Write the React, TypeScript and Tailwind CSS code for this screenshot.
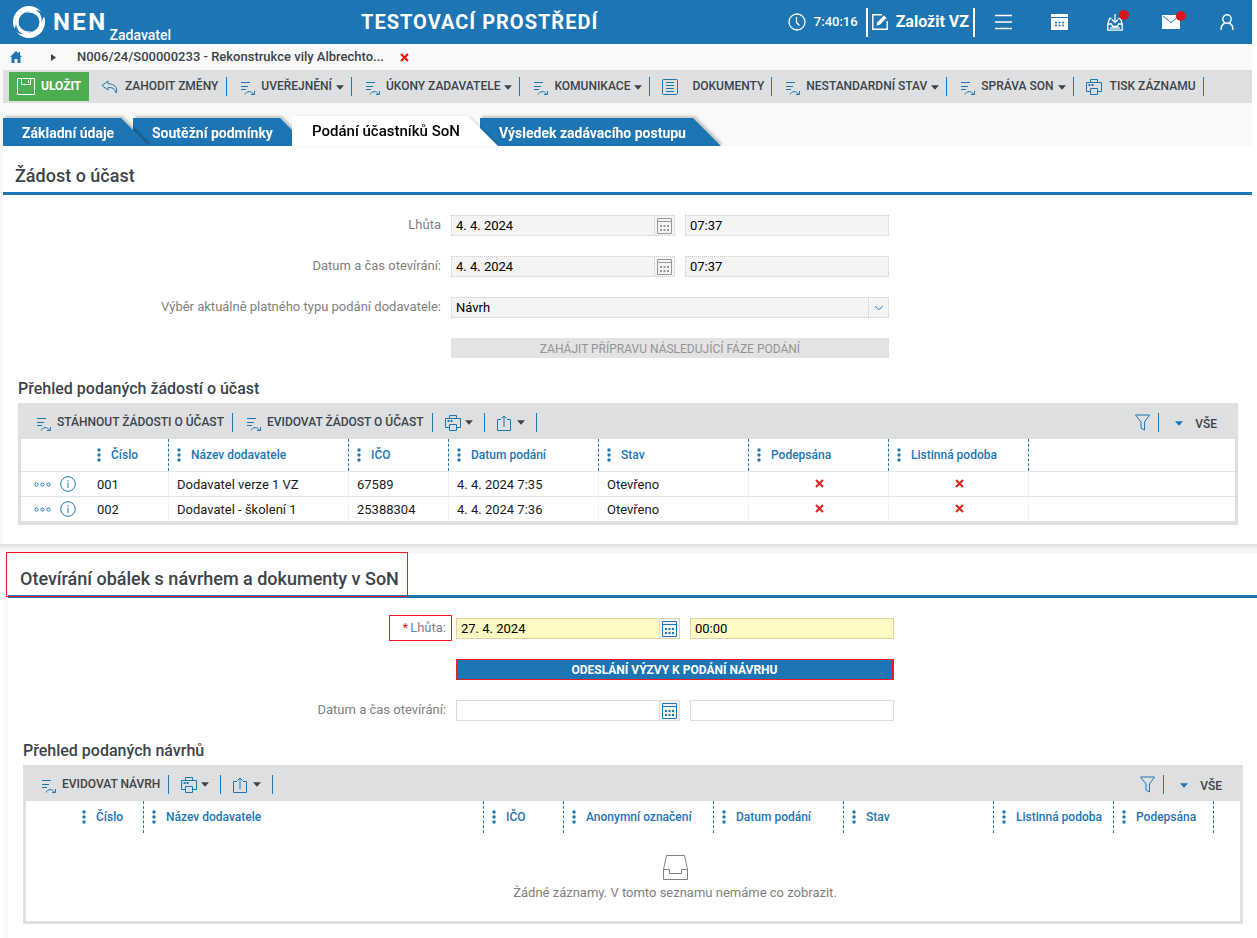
import type { ReactNode } from 'react'

type IconProps = { className?: string }

interface ToolbarItem {
  label: string
  icon: 'process' | 'list' | 'printer'
  caret?: boolean
}

interface Column {
  label: string
  width: string
}

const toolbarItems: ToolbarItem[] = [
  { label: 'UVEŘEJNĚNÍ', icon: 'process', caret: true },
  { label: 'ÚKONY ZADAVATELE', icon: 'process', caret: true },
  { label: 'KOMUNIKACE', icon: 'process', caret: true },
  { label: 'DOKUMENTY', icon: 'list' },
  { label: 'NESTANDARDNÍ STAV', icon: 'process', caret: true },
  { label: 'SPRÁVA SON', icon: 'process', caret: true },
  { label: 'TISK ZÁZNAMU', icon: 'printer' },
]

const requestColumns: Column[] = [
  { label: 'Číslo', width: 'w-[80px]' },
  { label: 'Název dodavatele', width: 'w-[180px]' },
  { label: 'IČO', width: 'w-[100px]' },
  { label: 'Datum podání', width: 'w-[150px]' },
  { label: 'Stav', width: 'w-[150px]' },
  { label: 'Podepsána', width: 'w-[140px]' },
  { label: 'Listinná podoba', width: 'w-[140px]' },
]

const offerColumns: Column[] = [
  { label: 'Číslo', width: 'w-[70px]' },
  { label: 'Název dodavatele', width: 'w-[340px]' },
  { label: 'IČO', width: 'w-[80px]' },
  { label: 'Anonymní označení', width: 'w-[150px]' },
  { label: 'Datum podání', width: 'w-[130px]' },
  { label: 'Stav', width: 'w-[150px]' },
  { label: 'Listinná podoba', width: 'w-[120px]' },
  { label: 'Podepsána', width: 'w-[100px]' },
]

const requests = [
  { number: '001', name: 'Dodavatel verze 1 VZ', ico: '67589', submitted: '4. 4. 2024 7:35', state: 'Otevřeno' },
  { number: '002', name: 'Dodavatel - školení 1', ico: '25388304', submitted: '4. 4. 2024 7:36', state: 'Otevřeno' },
]

/* Icons */

function Logo() {
  return (
    <svg width="34" height="34" viewBox="0 0 34 34" fill="#fff">
      <path
        fillRule="evenodd"
        d="M17 1a16 16 0 1 1 0 32a16 16 0 1 1 0-32zM17 7.500a10.500 9.500 0 1 0 0 19a10.500 9.500 0 1 0 0-19z"
      />
      <path d="M1 23C3 24 4 21 4 17C4 22 6 27 11 29C7 29 3 27 1 23z" fill="#1d75b3" />
      <path d="M24 5C29 8 30 13 29.500 18C30.500 14 31 12 33 11C31 7 28 5 24 5z" fill="#1d75b3" />
      <path d="M7 17C7 11 11 7 18 6.500C12 8 8.500 12 7.500 20z" fill="#1d75b3" />
      <path d="M27 17C27 23 23 27 16 27.500C22 26 25.500 22 26.500 14z" fill="#1d75b3" />
    </svg>
  )
}

function ProcessIcon() {
  return (
    <svg width="14" height="16" viewBox="0 0 14 16" fill="none" stroke="#1d75b3">
      <path d="M0 2.500h9M0 6.500h7M0 9.500h5" />
      <path d="M4 14.500C5.500 10.800 10.500 10.800 12.300 14M13.500 11v3.500H10" />
    </svg>
  )
}

function ListIcon() {
  return (
    <svg width="16" height="16" viewBox="0 0 16 16" fill="none" stroke="#1d75b3">
      <rect x=".5" y=".5" width="15" height="15" rx="1" />
      <path d="M4 3.500h8M4 6.500h8M4 9.500h8M4 12.500h8" />
    </svg>
  )
}

function PrinterIcon() {
  return (
    <svg width="16" height="16" viewBox="0 0 16 16" fill="none" stroke="#1d75b3">
      <path d="M4.500 3.500v-3h7v3M4.500 12.500h-4v-9h15v9h-4" />
      <path d="M4.500 9.500h7v6h-7z" />
      <path d="M2.500 6h2M5.500 6h2" strokeWidth="2" />
    </svg>
  )
}

function ShareIcon() {
  return (
    <svg width="14" height="16" viewBox="0 0 14 16" fill="none" stroke="#1d75b3">
      <path d="M4 4.500H.5v11h13v-11H10M7 1v11M4.500 3.500L7 1l2.500 2.500" />
    </svg>
  )
}

function UndoIcon() {
  return (
    <svg width="17" height="14" viewBox="0 0 17 14" fill="none" stroke="#1d75b3" strokeLinejoin="round">
      <path d="M7 1L1 5.500L7 10V7.500C11 7.200 14 8.500 15 13C17.500 8 13.500 3.700 7 3.700z" />
    </svg>
  )
}

function SaveIcon() {
  return (
    <svg width="18" height="17" viewBox="0 0 18 17" fill="none" stroke="#fff">
      <path d="M.5.500h17v16H.5zM4.500.500v6h9v-6M11.500 2v3" />
    </svg>
  )
}

function FilterIcon() {
  return (
    <svg width="15" height="17" viewBox="0 0 15 17" fill="none" stroke="#1d75b3">
      <path d="M.5 1h14L9.500 8v8l-3.500-2V8z" />
    </svg>
  )
}

function Caret({ className = 'text-[#3b444b]' }: IconProps) {
  return (
    <svg width="8" height="5" viewBox="0 0 8 5" className={className} fill="currentColor">
      <path d="M0 .3h8L4 4.700z" />
    </svg>
  )
}

function CalendarIcon({ className = 'text-[#1d75b3]' }: IconProps) {
  return (
    <svg width="15" height="16" viewBox="0 0 15 16" className={className} fill="none" stroke="currentColor">
      <path d="M.5.500h14v15H.5zM0 3.500h15" />
      <path d="M3 8h2M6.500 8h2M10 8h2M3 12h2M6.500 12h2M10 12h2" strokeWidth="2" />
    </svg>
  )
}

function InfoIcon() {
  return (
    <svg width="16" height="16" viewBox="0 0 16 16" fill="none" stroke="#1d75b3">
      <circle cx="8" cy="8" r="7.300" />
      <path d="M8 6.500V12M8 4v1.300" />
    </svg>
  )
}

function MoreIcon() {
  return (
    <svg width="17" height="5" viewBox="0 0 17 5" fill="none" stroke="#1d75b3">
      <circle cx="2.500" cy="2.500" r="1.600" />
      <circle cx="8.500" cy="2.500" r="1.600" />
      <circle cx="14.500" cy="2.500" r="1.600" />
    </svg>
  )
}

function DotsIcon() {
  return (
    <svg width="4" height="14" viewBox="0 0 4 14" fill="#1d75b3">
      <circle cx="2" cy="2" r="1.700" />
      <circle cx="2" cy="7" r="1.700" />
      <circle cx="2" cy="12" r="1.700" />
    </svg>
  )
}

function CrossIcon({ className = 'text-[#dd1f1f]' }: IconProps) {
  return (
    <svg width="9" height="9" viewBox="0 0 9 9" className={className} stroke="currentColor" strokeWidth="2">
      <path d="M1 1l7 7M8 1L1 8" />
    </svg>
  )
}

/* Page header */

function HeaderButton({ label, badge, children }: { label: string; badge?: boolean; children: ReactNode }) {
  return (
    <button aria-label={label} className="w-14 h-full flex items-center justify-center">
      <span className="relative">
        {children}
        {badge && <span className="absolute -top-1 -right-1.5 w-[10px] h-[10px] rounded-full bg-[#d8161b]" />}
      </span>
    </button>
  )
}

function Header() {
  return (
    <header className="h-11 bg-[#1d75b3] text-white flex items-center">
      <a href="#" className="w-[361px] h-full shrink-0 pl-3 flex items-center">
        <Logo />
        <span className="ml-[7px] text-2xl leading-6 font-bold tracking-widest">NEN</span>
        <span className="self-end ml-[2px] pb-px text-sm leading-4 font-medium">Zadavatel</span>
      </a>
      <h1 className="text-xl font-bold tracking-wider whitespace-nowrap">TESTOVACÍ PROSTŘEDÍ</h1>
      <div className="ml-auto -mr-[3px] h-full flex items-center">
        <svg width="18" height="18" viewBox="0 0 18 18" fill="none" stroke="#fff" strokeWidth="1.300">
          <circle cx="9" cy="9" r="8" />
          <path d="M8.500 4v5.500l3 3" />
        </svg>
        <time className="ml-2 text-[13px] font-medium">7:40:16</time>
        <button className="ml-2 h-[29px] pl-1 pr-1 border-x-2 border-white flex items-center gap-2 font-bold text-base">
          <svg width="16" height="16" viewBox="0 0 16 16" fill="none" stroke="#fff">
            <path d="M10 .8H.8v14.400h14.400V7" strokeWidth="1.400" />
            <path d="M4.500 11.500l.8-3.300L12 1.500l2.500 2.500l-6.700 6.700z" fill="#fff" stroke="none" />
          </svg>
          <span className="whitespace-nowrap">Založit VZ</span>
        </button>
        <HeaderButton label="Menu">
          <svg width="17" height="16" viewBox="0 0 17 16" stroke="#fff" strokeWidth="1.500">
            <path d="M0 1.500h17M0 8h17M0 14.500h17" />
          </svg>
        </HeaderButton>
        <HeaderButton label="Kalendář">
          <svg width="17" height="16" viewBox="0 0 17 16">
            <path d="M0 0h17v3H0zM0 4h17v12H0z" fill="#fff" />
            <path d="M4 8.500h2M7.500 8.500h2M11 8.500h2M4 11.500h2M7.500 11.500h2M11 11.500h2" stroke="#1d75b3" strokeWidth="1.500" />
          </svg>
        </HeaderButton>
        <HeaderButton label="Doručené" badge>
          <svg width="16" height="17" viewBox="0 0 16 17" fill="none" stroke="#fff" strokeWidth="1.300">
            <path d="M4.500 4.500H2.500L.8 10v6.200h14.400V10l-1.700-5.500h-2M.8 10h3.700l1 2.500h5l1-2.500h3.700" />
            <path d="M8 0v8.500M5 5.500l3 3l3-3" />
            <path d="M3 14h10" />
          </svg>
        </HeaderButton>
        <HeaderButton label="Zprávy" badge>
          <svg width="18" height="14" viewBox="0 0 18 14">
            <path d="M0 0h18v14H0z" fill="#fff" />
            <path d="M1 1l8 6.500L17 1" fill="none" stroke="#1d75b3" />
          </svg>
        </HeaderButton>
        <HeaderButton label="Uživatel">
          <svg width="14" height="16" viewBox="0 0 14 16" fill="none" stroke="#fff" strokeWidth="1.400">
            <circle cx="7" cy="5" r="4.200" />
            <path d="M1 16c0-4 1.500-6 4-7M13 16c0-4-1.500-6-4-7" />
          </svg>
        </HeaderButton>
      </div>
    </header>
  )
}

function Breadcrumb() {
  return (
    <nav className="h-[26px] flex items-center text-[13px] font-medium text-[#3b444b]">
      <a href="#" aria-label="Domů" className="ml-[10px]">
        <svg width="12" height="12" viewBox="0 0 12 12" fill="#1d75b3">
          <path d="M6 0L0 6h1.500v6h3V8h3v4h3V6H12L10 4V1H8.500v1.500z" />
        </svg>
      </a>
      <svg width="5" height="7" viewBox="0 0 5 7" className="ml-[29px]" fill="#3b444b">
        <path d="M0 0l5 3.500L0 7z" />
      </svg>
      <a href="#" className="ml-[21px]">N006/24/S00000233 - Rekonstrukce vily Albrechto...</a>
      <button aria-label="Zavřít" className="ml-4">
        <CrossIcon className="text-[#fb0505]" />
      </button>
    </nav>
  )
}

function Toolbar() {
  return (
    <div className="ml-[3px] h-[33px] bg-[#dedfe1] flex items-center text-xs font-medium text-[#3b444b] whitespace-nowrap">
      <button className="ml-[6px] h-[29px] w-20 pl-2 bg-[#4cae50] text-white font-bold flex items-center gap-[6px]">
        <SaveIcon />
        <span className="pb-[2px]">ULOŽIT</span>
      </button>
      <button className="h-[19px] pl-3 pr-2 flex items-center gap-[7px] border-r border-[#1d75b3]">
        <UndoIcon />
        <span className="pb-[2px]">ZAHODIT ZMĚNY</span>
      </button>
      {toolbarItems.map((item) => (
        <button key={item.label} className="h-[19px] pl-3 pr-[7px] flex items-center border-r border-[#1d75b3]">
          {item.icon === 'process' && <span className="pl-[2px] pr-[6px] pt-[3px]"><ProcessIcon /></span>}
          {item.icon === 'list' && <span className="pr-[14px]"><ListIcon /></span>}
          {item.icon === 'printer' && <span className="pr-2"><PrinterIcon /></span>}
          <span className="pb-[2px]">{item.label}</span>
          {item.caret && <span className="pl-1 pt-[2px]"><Caret /></span>}
        </button>
      ))}
    </div>
  )
}

function Tabs() {
  return (
    <div role="tablist" className="ml-[3px] mt-[13px] h-[30px] flex items-end text-sm font-bold text-white whitespace-nowrap">
      <div className="relative z-20 drop-shadow-[2px_-2px_1px_rgba(0,0,0,0.2)]">
        <button role="tab" className="h-7 w-[146px] pl-[19px] pt-[2px] text-left bg-[#1d75b3] [clip-path:polygon(0_0,calc(100%-28px)_0,100%_100%,0_100%)]">
          Základní údaje
        </button>
      </div>
      <div className="relative z-10 -ml-4 drop-shadow-[2px_-2px_1px_rgba(0,0,0,0.2)]">
        <button role="tab" className="h-7 w-[175px] pl-[19px] pt-[2px] text-left bg-[#1d75b3] [clip-path:polygon(0_0,calc(100%-28px)_0,100%_100%,0_100%)]">
          Soutěžní podmínky
        </button>
      </div>
      <div className="relative z-30 -ml-4 drop-shadow-[2px_0px_1px_rgba(0,0,0,0.1)]">
        <button role="tab" aria-selected="true" className="h-[30px] w-[206px] pl-5 pt-px text-left bg-white text-black text-[15px] font-medium [clip-path:polygon(0_0,calc(100%-30px)_0,100%_100%,0_100%)]">
          Podání účastníků SoN
        </button>
      </div>
      <div className="-ml-[18px] drop-shadow-[2px_-2px_1px_rgba(0,0,0,0.2)]">
        <button role="tab" className="h-7 w-[241px] pl-[19px] pt-[2px] text-left bg-[#1d75b3] [clip-path:polygon(0_0,calc(100%-28px)_0,100%_100%,0_100%)]">
          Výsledek zadávacího postupu
        </button>
      </div>
    </div>
  )
}

/* Form */

const fieldStyles = {
  locked: 'border-dotted border-[#cccccc] bg-[#f4f4f4]',
  required: 'border-[#ddd5a0] bg-[#fff9c4]',
  empty: 'border-[#dcdcdc] bg-white',
}

type FieldKind = keyof typeof fieldStyles

function FormRow({ children }: { children: ReactNode }) {
  return <div className="grid grid-cols-[438px_438px] grid-rows-[21px] gap-[10px]">{children}</div>
}

function DateTimeRow({ id, label, kind, date, time }: { id: string; label: ReactNode; kind: FieldKind; date: string; time: string }) {
  const locked = kind === 'locked'
  return (
    <FormRow>
      <label htmlFor={id} className="justify-self-end text-[13px] leading-5 text-[#808080]">{label}</label>
      <div className="flex gap-[10px] text-[13px] leading-[19px] text-black">
        <div className={`flex w-[224px] border ${fieldStyles[kind]}`}>
          <input id={id} defaultValue={date} readOnly={locked} className="min-w-0 flex-1 pl-1 outline-none" />
          <button
            aria-label="Vybrat datum"
            disabled={locked}
            className={`w-5 pr-px flex items-center justify-center border-l ${locked ? 'border-dotted border-[#cccccc]' : 'border-[#dcdcdc] bg-[#f4f4f4]'}`}
          >
            <CalendarIcon className={locked ? 'text-[#999999]' : 'text-[#1d75b3]'} />
          </button>
        </div>
        <input
          aria-label="Čas"
          defaultValue={time}
          readOnly={locked}
          className={`min-w-0 flex-1 pl-1 border outline-none ${fieldStyles[kind]}`}
        />
      </div>
    </FormRow>
  )
}

/* Data grid */

function GridToolbar({ actions }: { actions: string[] }) {
  return (
    <div className="h-[33px] pl-[14px] pr-[18px] flex items-center text-xs font-medium text-[#3b444b] whitespace-nowrap">
      {actions.map((action) => (
        <button key={action} className="h-[19px] pr-2 mr-[12px] flex items-center gap-[6px] border-r border-[#1d75b3]">
          <span className="pl-[2px] pt-[3px]"><ProcessIcon /></span>
          <span className="pb-[2px]">{action}</span>
        </button>
      ))}
      <button aria-label="Tisk" className="h-[19px] pr-[11px] flex items-center gap-1 border-r border-[#1d75b3]">
        <PrinterIcon />
        <Caret />
      </button>
      <button aria-label="Export" className="h-[19px] pl-3 pr-[11px] flex items-center gap-[6px] border-r border-[#1d75b3]">
        <ShareIcon />
        <Caret />
      </button>
      <button aria-label="Filtr" className="ml-auto h-[19px] pr-2 flex items-center border-r border-[#1d75b3]">
        <FilterIcon />
      </button>
      <button className="pl-4 pt-[2px] flex items-center gap-3">
        <Caret className="text-[#1d75b3]" />
        VŠE
      </button>
    </div>
  )
}

function HeadRow({ columns }: { columns: Column[] }) {
  return (
    <thead>
      <tr className="h-8">
        <td />
        {columns.map((column) => (
          <th key={column.label} className="p-0 border-r border-dashed border-[#1d75b3] text-left text-xs font-medium text-[#1d75b3] whitespace-nowrap">
            <span className="pl-2 flex items-center gap-[10px]">
              <DotsIcon />
              {column.label}
            </span>
          </th>
        ))}
        <td />
      </tr>
    </thead>
  )
}

function ColumnWidths({ first, columns }: { first: string; columns: Column[] }) {
  return (
    <colgroup>
      <col className={first} />
      {columns.map((column) => (
        <col key={column.label} className={column.width} />
      ))}
      <col />
    </colgroup>
  )
}

function CrossCell({ className }: { className: string }) {
  return (
    <td className={className}>
      <span className="flex justify-center pr-[6px] pb-[3px]">
        <CrossIcon />
      </span>
    </td>
  )
}

function RequestsTable() {
  const cell = 'p-0 pl-2 pt-px border-r border-r-[#e2e8ec] [border-right-style:dotted] border-t border-t-[#dde6ea] whitespace-nowrap'
  return (
    <table className="w-full table-fixed border-separate border-spacing-0 border-b border-[#dde6ea] bg-white text-[13px] text-[#1a1a1a]">
      <ColumnWidths first="w-[68px]" columns={requestColumns} />
      <HeadRow columns={requestColumns} />
      <tbody>
        {requests.map((row) => (
          <tr key={row.number} className="h-[25px]">
            <td className="p-0 border-t border-[#dde6ea]">
              <div className="pl-[13px] flex items-center gap-[9px]">
                <button aria-label="Další akce"><MoreIcon /></button>
                <button aria-label="Detail"><InfoIcon /></button>
              </div>
            </td>
            <td className={cell}>{row.number}</td>
            <td className={cell}>{row.name}</td>
            <td className={cell}>{row.ico}</td>
            <td className={cell}>{row.submitted}</td>
            <td className={cell}>{row.state}</td>
            <CrossCell className={cell} />
            <CrossCell className={cell} />
            <td className="border-t border-[#dde6ea]" />
          </tr>
        ))}
      </tbody>
    </table>
  )
}

function OffersTable() {
  return (
    <div className="bg-white">
      <table className="w-full table-fixed border-separate border-spacing-0">
        <ColumnWidths first="w-[48px]" columns={offerColumns} />
        <HeadRow columns={offerColumns} />
      </table>
      <div className="h-[88px] pt-[21px] pl-[84px] flex flex-col items-center gap-[3px] text-[13px] leading-[18px] text-[#808080]">
        <svg width="27" height="27" viewBox="0 0 27 27" fill="none" stroke="#808080">
          <path d="M4.500 1.500h18l3 14v10h-24v-10zM1.500 15.500h6v4h12v-4h6" />
        </svg>
        Žádné záznamy. V tomto seznamu nemáme co zobrazit.
      </div>
    </div>
  )
}

export default function App() {
  return (
    <div className="bg-white font-[Roboto,sans-serif]">
      <div className="mr-[5px] bg-[#f9f9f9]">
        <Header />
        <Breadcrumb />
        <Toolbar />
        <Tabs />
      </div>

      <section className="border-l-[3px] border-[#f9f9f9] mr-[5px] pb-[19px]">
        <h2 className="h-[49px] pl-3 pt-4 border-b-[3px] border-[#1d75b3] text-lg leading-7 font-medium text-[#3b444b]">
          Žádost o účast
        </h2>
        <div className="pt-5 flex flex-col gap-5">
          <DateTimeRow id="deadline" label="Lhůta" kind="locked" date="4. 4. 2024" time="07:37" />
          <DateTimeRow id="opening" label="Datum a čas otevírání:" kind="locked" date="4. 4. 2024" time="07:37" />
          <FormRow>
            <label htmlFor="kind" className="justify-self-end text-[13px] leading-5 text-[#808080]">
              Výběr aktuálně platného typu podání dodavatele:
            </label>
            <div className="grid border border-dotted border-[#cccccc] bg-[#f4f4f4] text-[13px] leading-[19px] text-black">
              <select id="kind" className="col-start-1 row-start-1 pl-1 appearance-none outline-none">
                <option>Návrh</option>
              </select>
              <span className="col-start-1 row-start-1 justify-self-end w-5 flex items-center justify-center border-l border-dotted border-[#cccccc] pointer-events-none">
                <svg width="10" height="6" viewBox="0 0 10 6" fill="none" stroke="#1d75b3">
                  <path d="M1 .8l4 4l4-4" />
                </svg>
              </span>
            </div>
          </FormRow>
          <FormRow>
            <button disabled className="col-start-2 h-5 pt-px bg-[#e3e3e3] text-xs text-[#949494]">
              ZAHÁJIT PŘÍPRAVU NÁSLEDUJÍCÍ FÁZE PODÁNÍ
            </button>
          </FormRow>
        </div>
        <div className="ml-[15px] mr-[14px] pt-[18px]">
          <h3 className="text-base leading-6 font-medium text-[#3b444b]">Přehled podaných žádostí o účast</h3>
          <div className="mt-[2px] border-[3px] border-[#dedfe1] bg-[#dedfe1]">
            <GridToolbar actions={['STÁHNOUT ŽÁDOSTI O ÚČAST', 'EVIDOVAT ŽÁDOST O ÚČAST']} />
            <RequestsTable />
          </div>
        </div>
      </section>

      <div className="h-[10px] bg-linear-to-b from-[#e0e0e0] via-[#f4f4f4] to-[#f9f9f9]" />

      <section className="ml-1 border-l-4 border-[#f9f9f9]">
        <h2 className="h-11 border-b-[3px] border-[#1d75b3] text-lg leading-7 font-medium text-[#3b444b] flex">
          <span className="-mt-[2px] -mb-[2px] -ml-[2px] pt-3 pl-[13px] pr-2 h-[45px] border border-[#ed1c24]">
            Otevírání obálek s návrhem a dokumenty v SoN
          </span>
        </h2>
        <div className="pt-5 flex flex-col gap-5">
          <DateTimeRow
            id="offer-deadline"
            label={
              <span className="-mt-[3px] -mr-[6px] pt-[2px] pb-[2px] pl-[13px] pr-[5px] block border border-[#ed1c24]">
                <span className="mr-[2px] text-[#dd1f1f]">*</span>Lhůta:
              </span>
            }
            kind="required"
            date="27. 4. 2024"
            time="00:00"
          />
          <FormRow>
            <button className="col-start-2 bg-[#1d75b3] border border-r-2 border-[#ed1c24] text-xs font-bold text-white">
              ODESLÁNÍ VÝZVY K PODÁNÍ NÁVRHU
            </button>
          </FormRow>
          <DateTimeRow id="offer-opening" label="Datum a čas otevírání:" kind="empty" date="" time="" />
        </div>
        <div className="ml-[15px] mr-[14px] pt-[18px] pb-[14px]">
          <h3 className="text-base leading-6 font-medium text-[#3b444b]">Přehled podaných návrhů</h3>
          <div className="mt-[2px] border-[3px] border-[#dedfe1] bg-[#dedfe1]">
            <GridToolbar actions={['EVIDOVAT NÁVRH']} />
            <OffersTable />
          </div>
        </div>
      </section>
    </div>
  )
}
